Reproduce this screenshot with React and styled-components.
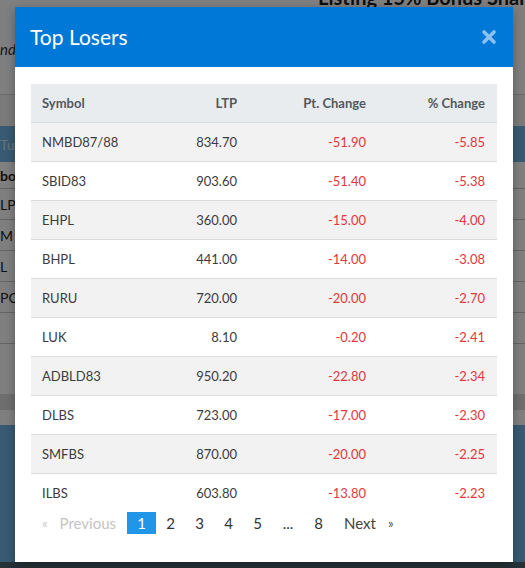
import React from 'react';
import styled, { createGlobalStyle } from 'styled-components';

const GlobalStyle = createGlobalStyle`
  html, body {
    margin: 0;
    padding: 0;
  }
  body {
    font-family: Lato, 'Open Sans', sans-serif;
    color: #333;
    overflow: hidden;
  }
`;

const losers = [
  { symbol: 'NMBD87/88', ltp: '834.70', pt: '-51.90', pct: '-5.85' },
  { symbol: 'SBID83', ltp: '903.60', pt: '-51.40', pct: '-5.38' },
  { symbol: 'EHPL', ltp: '360.00', pt: '-15.00', pct: '-4.00' },
  { symbol: 'BHPL', ltp: '441.00', pt: '-14.00', pct: '-3.08' },
  { symbol: 'RURU', ltp: '720.00', pt: '-20.00', pct: '-2.70' },
  { symbol: 'LUK', ltp: '8.10', pt: '-0.20', pct: '-2.41' },
  { symbol: 'ADBLD83', ltp: '950.20', pt: '-22.80', pct: '-2.34' },
  { symbol: 'DLBS', ltp: '723.00', pt: '-17.00', pct: '-2.30' },
  { symbol: 'SMFBS', ltp: '870.00', pt: '-20.00', pct: '-2.25' },
  { symbol: 'ILBS', ltp: '603.80', pt: '-13.80', pct: '-2.23' },
];

const pages = ['1', '2', '3', '4', '5', '...', '8'];

const backRows = ['LP', 'M', 'L', 'PC', ''];

/* ---------- page behind the modal ---------- */

const Screen = styled.div`
  position: relative;
  width: 525px;
  height: 568px;
  overflow: hidden;
  background: #fff;
`;

const Page = styled.div`
  display: flex;
  flex-direction: column;
  height: 568px;
`;

const TopBand = styled.div`
  display: grid;
  grid-template-columns: 318px 1fr;
  height: 94px;
  border-bottom: 1px solid #d6d6d6;
  overflow: hidden;
`;

const Teaser = styled.div`
  padding-top: 40px;
  font-size: 15px;
  font-style: italic;
  color: #333;
  white-space: nowrap;
`;

const Headline = styled.div`
  margin-top: -15px;
  font-size: 20px;
  font-weight: 700;
  color: #1a1a1a;
  white-space: nowrap;
`;

const GreyStrip = styled.div`
  height: 31px;
  background: #f4f4f4;
`;

const BlueStrip = styled.div`
  height: ${(p) => p.$h}px;
  background: #70b4e6;
  color: #cfe6f7;
  font-size: 14px;
  display: flex;
  align-items: center;
  white-space: nowrap;
`;

const BackRow = styled.div`
  height: ${(p) => p.$h}px;
  border-bottom: 1px solid #c8c8c8;
  display: flex;
  align-items: center;
  font-size: 14px;
  font-weight: ${(p) => (p.$bold ? 700 : 400)};
  color: #222;
`;

const Spacer = styled.div`
  height: ${(p) => p.$h}px;
  background: ${(p) => p.$bg || '#fff'};
`;

const Footer = styled.div`
  flex: 1;
  background: #4c6470;
`;

const Overlay = styled.div`
  position: absolute;
  inset: 0;
  background: rgba(0, 0, 0, 0.5);
`;

/* ---------- modal ---------- */

const Modal = styled.div`
  position: absolute;
  top: 7px;
  left: 15px;
  width: 498px;
  height: 555px;
  background: #fff;
  display: flex;
  flex-direction: column;
  box-shadow: 0 3px 9px rgba(0, 0, 0, 0.3);
`;

const ModalHeader = styled.div`
  height: 60px;
  background: #0078d7;
  display: flex;
  align-items: center;
  justify-content: space-between;
  padding: 0 16px 0 15px;
  box-sizing: border-box;
`;

const Title = styled.h4`
  margin: 0;
  font-size: 21px;
  font-weight: 400;
  color: #fff;
  padding-bottom: 2px;
`;

const CloseButton = styled.button`
  border: 0;
  background: none;
  padding: 0;
  width: 16px;
  height: 16px;
  display: flex;
  cursor: pointer;
`;

const ModalBody = styled.div`
  padding: 17px 16px 0;
`;

const Table = styled.table`
  width: 466px;
  border-collapse: collapse;
  table-layout: fixed;
  font-size: 13px;
`;

const Th = styled.th`
  width: ${(p) => p.$w}px;
  height: 38px;
  padding: 0 ${(p) => (p.$left ? 0 : 12)}px 0 ${(p) => (p.$left ? 11 : 0)}px;
  text-align: ${(p) => (p.$left ? 'left' : 'right')};
  background: #e9ecef;
  font-weight: 700;
  color: #53585c;
  box-sizing: border-box;
`;

const Tr = styled.tr`
  background: ${(p) => (p.$odd ? '#f2f2f2' : '#fff')};
  border-top: 1px solid #dcdcdc;
`;

const Td = styled.td`
  height: 39px;
  padding: 0 ${(p) => (p.$left ? 0 : 12)}px 0 ${(p) => (p.$left ? 11 : 0)}px;
  text-align: ${(p) => (p.$left ? 'left' : 'right')};
  color: ${(p) => (p.$down ? '#e1373c' : '#3b3b3b')};
  box-sizing: border-box;
`;

const Pagination = styled.nav`
  display: flex;
  align-items: center;
  height: 22px;
  font-size: 15px;
`;

const EdgeLink = styled.span`
  display: flex;
  align-items: center;
  gap: 12px;
  padding: 0 11px;
  color: ${(p) => (p.$disabled ? '#c4c4c4' : '#444')};
`;

const Arrow = styled.span`
  font-size: 13px;
  color: ${(p) => (p.$disabled ? '#c9c9c9' : '#555')};
`;

const PageItem = styled.span`
  width: ${(p) => (p.$wide ? 32 : 29)}px;
  height: 22px;
  display: flex;
  align-items: center;
  justify-content: center;
  color: ${(p) => (p.$active ? '#fff' : '#333')};
  background: ${(p) => (p.$active ? '#2196e8' : 'transparent')};
  box-sizing: border-box;
`;

function CloseIcon() {
  return (
    <svg width='16' height='16' viewBox='0 0 16 16'>
      <path
        d='M3 3 L13 13 M13 3 L3 13'
        stroke='rgba(255,255,255,0.55)'
        strokeWidth='3.6'
        strokeLinecap='round'
      />
    </svg>
  );
}

export default function App() {
  return (
    <Screen>
      <GlobalStyle />
      <Page>
        <TopBand>
          <Teaser>nder review</Teaser>
          <Headline>Listing 15% Bonus Shares of</Headline>
        </TopBand>
        <GreyStrip />
        <BlueStrip $h={36}>Turnover</BlueStrip>
        <BackRow $h={26} $bold>
          bol
        </BackRow>
        {backRows.map((label, i) => (
          <BackRow key={i} $h={30}>
            {label}
          </BackRow>
        ))}
        <Spacer $h={50} />
        <Spacer $h={16} $bg='#dcdcdc' />
        <Spacer $h={15} />
        <BlueStrip $h={137} />
        <Footer />
      </Page>
      <Overlay />
      <Modal>
        <ModalHeader>
          <Title>Top Losers</Title>
          <CloseButton type='button' aria-label='Close'>
            <CloseIcon />
          </CloseButton>
        </ModalHeader>
        <ModalBody>
          <Table>
            <thead>
              <tr>
                <Th $w={100} $left>
                  Symbol
                </Th>
                <Th $w={118}>LTP</Th>
                <Th $w={129}>Pt. Change</Th>
                <Th $w={119}>% Change</Th>
              </tr>
            </thead>
            <tbody>
              {losers.map((row, i) => (
                <Tr key={row.symbol} $odd={i % 2 === 0}>
                  <Td $left>{row.symbol}</Td>
                  <Td>{row.ltp}</Td>
                  <Td $down>{row.pt}</Td>
                  <Td $down>{row.pct}</Td>
                </Tr>
              ))}
            </tbody>
          </Table>
          <Pagination>
            <EdgeLink $disabled>
              <Arrow $disabled>«</Arrow>
              Previous
            </EdgeLink>
            {pages.map((p) => (
              <PageItem key={p} $active={p === '1'} $wide={p === '...'}>
                {p}
              </PageItem>
            ))}
            <EdgeLink>
              Next
              <Arrow>»</Arrow>
            </EdgeLink>
          </Pagination>
        </ModalBody>
      </Modal>
    </Screen>
  );
}
